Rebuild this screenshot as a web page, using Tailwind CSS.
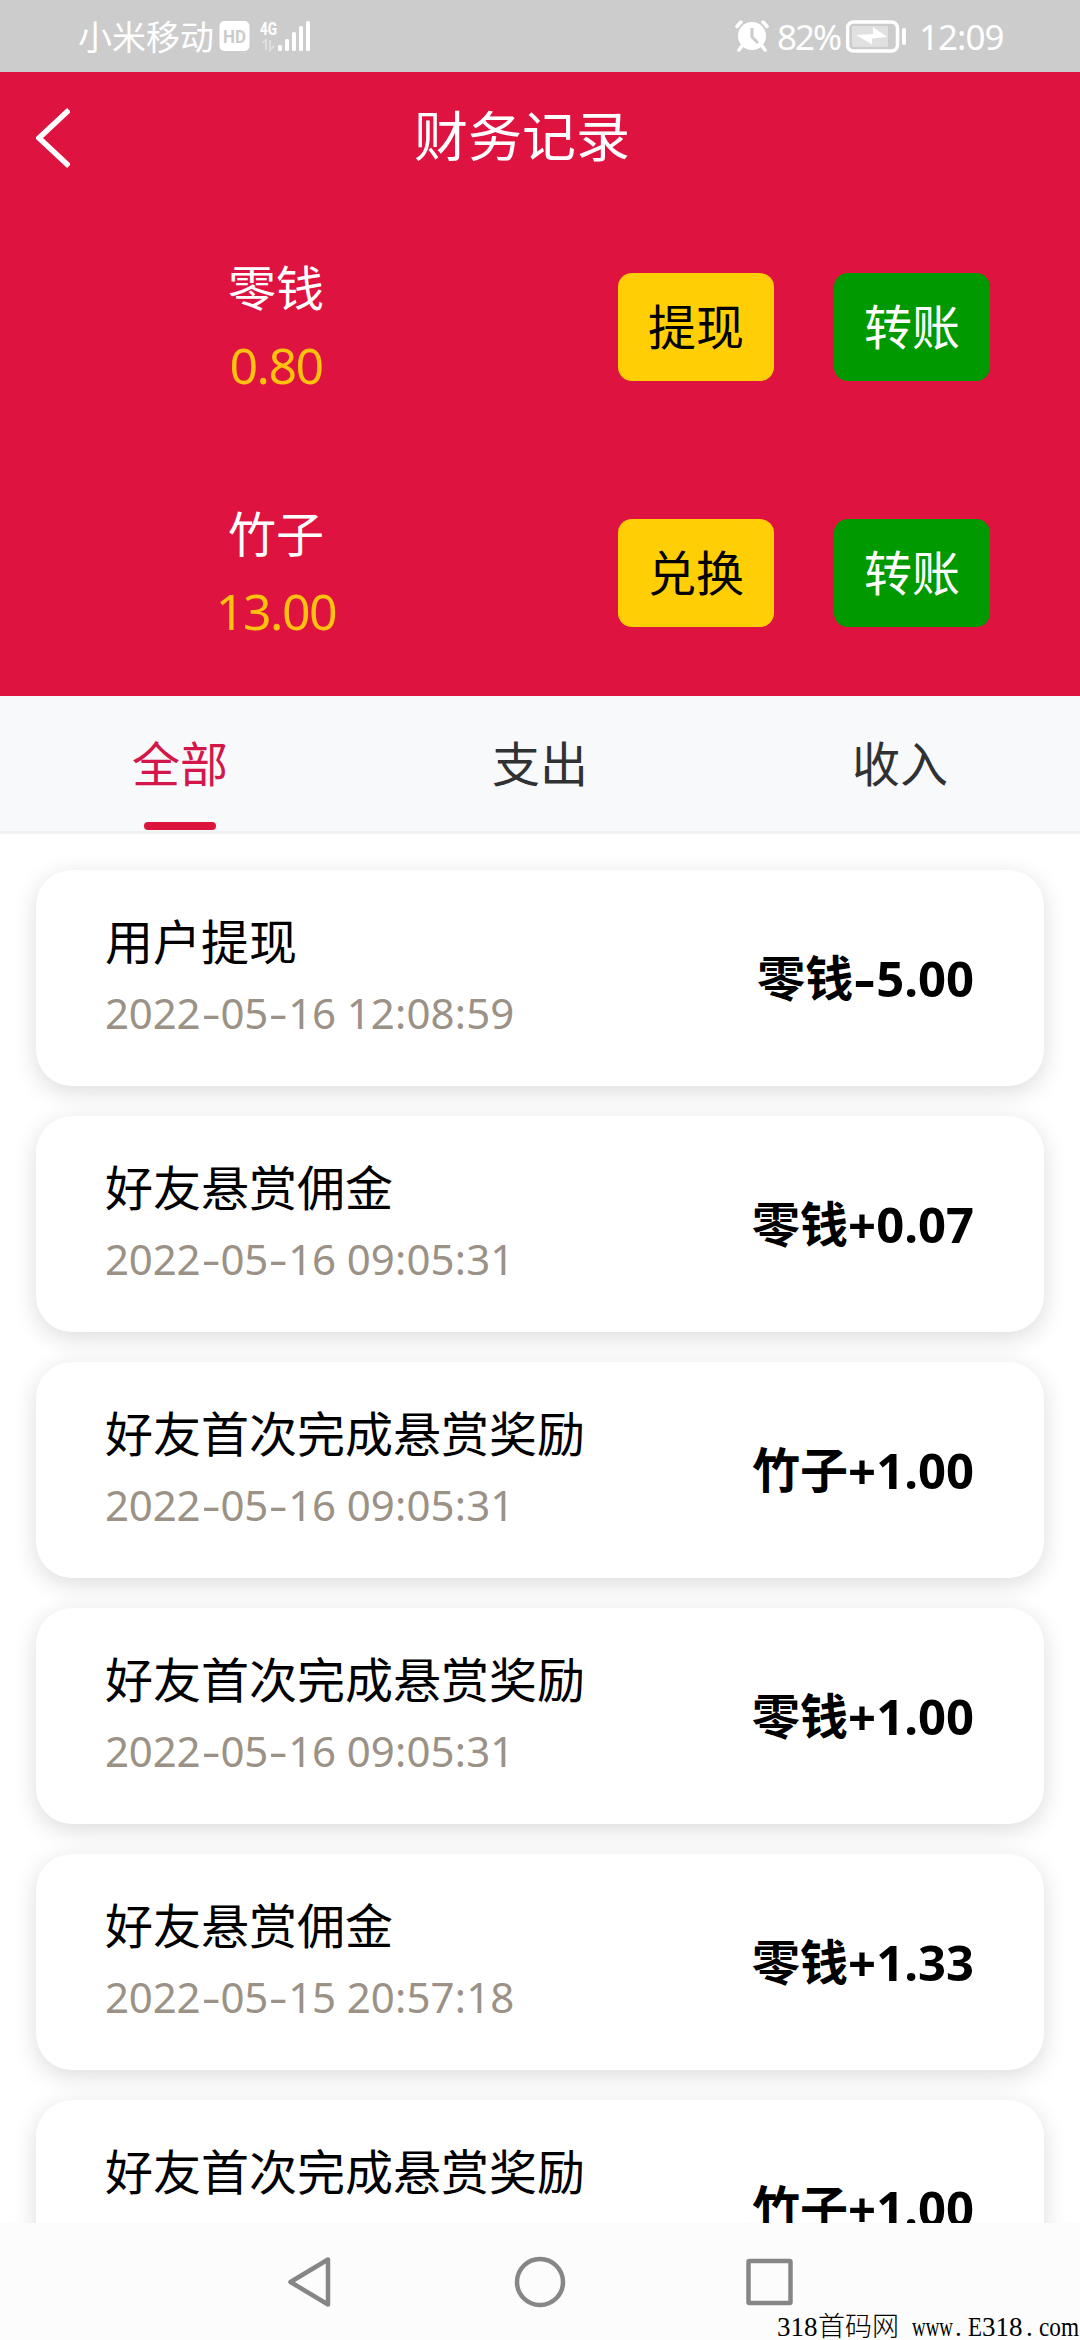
<!DOCTYPE html>
<html lang="zh-CN">
<head>
<meta charset="utf-8">
<title>财务记录</title>
<script src="https://cdn.jsdelivr.net/npm/@tailwindcss/browser@4"></script>
</head>
<body class="bg-white">
<div class="relative flex h-[2340px] w-[1080px] flex-col overflow-hidden font-['Noto_Sans','Noto_Sans_CJK_SC',sans-serif] whitespace-nowrap text-black">

  <!-- status bar -->
  <div class="flex h-[72px] shrink-0 items-center justify-between bg-[#ccc] pl-[78px] pr-[77px] text-white">
    <div class="flex items-center">
      <span class="pt-[2px] text-[34px] leading-[70px]">小米移动</span>
      <svg class="ml-[5px]" width="94" height="34" viewBox="0 0 94 34" fill="#fff">
        <rect x="0.500" y="2" width="30" height="30" rx="5"/>
        <text x="15.500" y="24" text-anchor="middle" font-family="Roboto" font-weight="700" font-size="19" textLength="23" lengthAdjust="spacingAndGlyphs" fill="#ccc">HD</text>
        <text x="41" y="15.500" font-family="Roboto" font-weight="700" font-size="19" textLength="17" lengthAdjust="spacingAndGlyphs">4G</text>
        <path d="M43 24l4-3v10M51 21v10l4-4" fill="none" stroke="#fff" stroke-opacity=".4" stroke-width="2"/>
        <rect x="59" y="26" width="4" height="6" rx="1.500"/><rect x="66" y="20" width="4" height="12" rx="1.500"/><rect x="73" y="13" width="4" height="19" rx="1.500"/><rect x="80" y="7" width="4" height="25" rx="1.500"/><rect x="87" y="2" width="4" height="30" rx="1.500"/>
      </svg>
    </div>
    <div class="flex items-center">
      <svg width="34" height="32" viewBox="0 0 34 32">
        <circle cx="17" cy="16" r="14" fill="#fff"/>
        <path d="M2 6.500L6 2M32 6.500L28 2M7 26l-3 4M27 26l3 4" stroke="#fff" stroke-width="3.500" stroke-linecap="round"/>
        <path d="M17 8v9l6 6" fill="none" stroke="#ccc" stroke-width="3"/>
      </svg>
      <span class="ml-[8px] w-[66px] pt-[2px] text-[35px] leading-[70px] tracking-[-2px]">82%</span>
      <svg class="ml-[3px]" width="62" height="34" viewBox="0 0 62 34">
        <rect x="1.500" y="3" width="50" height="29" rx="6" fill="none" stroke="#fff" stroke-width="3.500"/>
        <rect x="6" y="7" width="36" height="21" rx="1" fill="#fff" opacity=".4"/>
        <path d="M10 16l17-1 0-7 14 10-15 1.500 0 6z" fill="#fff"/>
        <rect x="56" y="9" width="4" height="17" rx="2" fill="#fff"/>
      </svg>
      <span class="ml-[11px] w-[84px] pt-[2px] text-[35px] leading-[70px] tracking-[-1px]">12:09</span>
    </div>
  </div>

  <!-- header and balances -->
  <div class="h-[624px] shrink-0 bg-[#de1340] text-white">
    <div class="flex h-[132px] items-center">
      <svg class="ml-[36px]" width="34" height="60" viewBox="0 0 34 60"><path d="M33 2L3 30l30 28" fill="none" stroke="#fff" stroke-width="5.500"/></svg>
      <h1 class="ml-[344px] text-[54px] leading-[128px] pb-[4px]">财务记录</h1>
    </div>
    <div class="flex h-[246px] items-center">
      <div class="w-[552px] text-center">
        <div class="text-[48px] leading-[78px]">零钱</div>
        <div class="text-[50px] leading-[76px] pb-[2px] tracking-[-1.500px] text-[#ffc20e]">0.80</div>
      </div>
      <div class="ml-[66px] h-[108px] w-[156px] rounded-[14px] bg-[#ffce05] text-center text-[48px] leading-[108px] text-black">提现</div>
      <div class="ml-[60px] h-[108px] w-[156px] rounded-[14px] bg-[#009900] text-center text-[48px] leading-[108px]">转账</div>
    </div>
    <div class="flex h-[246px] items-center">
      <div class="w-[552px] text-center">
        <div class="text-[48px] leading-[78px]">竹子</div>
        <div class="text-[50px] leading-[76px] pb-[2px] tracking-[-1.500px] text-[#ffc20e]">13.00</div>
      </div>
      <div class="ml-[66px] h-[108px] w-[156px] rounded-[14px] bg-[#ffce05] text-center text-[48px] leading-[108px] text-black">兑换</div>
      <div class="ml-[60px] h-[108px] w-[156px] rounded-[14px] bg-[#009900] text-center text-[48px] leading-[108px]">转账</div>
    </div>
  </div>

  <!-- tabs -->
  <div class="grid h-[138px] shrink-0 grid-cols-3 border-b-3 border-[#f0f1f3] bg-[#f8f9fb] text-center text-[48px] leading-[135px] text-[#303133]">
    <div class="flex flex-col items-center text-[#d3174a]"><span class="h-[126px]">全部</span><span class="h-[8px] w-[72px] rounded-full bg-[#dc143c]"></span></div>
    <div>支出</div>
    <div>收入</div>
  </div>

  <!-- records -->
  <div id="records" class="flex min-h-0 flex-1 flex-col gap-[30px] overflow-hidden px-[36px] pt-[36px]"></div>

  <!-- system navigation -->
  <div class="z-10 flex h-[117px] shrink-0 items-center justify-center bg-[#fcfcfc]">
    <svg width="506" height="52" viewBox="0 0 506 52" fill="none" stroke="#868686" stroke-width="4.500" stroke-linejoin="round">
      <path d="M41 3.500v45L3.500 26z"/>
      <circle cx="253" cy="26" r="23"/>
      <rect x="461.500" y="5" width="42" height="42" rx="1"/>
    </svg>
  </div>

  <!-- site mark -->
  <div class="absolute bottom-[-1px] left-[777px] z-20 flex h-[27px] items-center font-['Liberation_Serif','Noto_Sans_CJK_SC',serif] text-[27px] leading-[27px]">
    <span class="w-[41px]">318</span><span class="w-[94px] font-light">首码网</span><span class="w-[43px] origin-left scale-x-[.7]">www</span><span class="w-[13px]">.</span><span class="w-[14px] origin-left scale-x-[.85]">E</span><span class="w-[44px]">318</span><span class="w-[13px]">.</span><span class="w-[40px] origin-left scale-x-[.86]">com</span>
  </div>
</div>
<script>
const records = [
  ['用户提现', '2022-05-16 12:08:59', '零钱', '-5.00'],
  ['好友悬赏佣金', '2022-05-16 09:05:31', '零钱', '+0.07'],
  ['好友首次完成悬赏奖励', '2022-05-16 09:05:31', '竹子', '+1.00'],
  ['好友首次完成悬赏奖励', '2022-05-16 09:05:31', '零钱', '+1.00'],
  ['好友悬赏佣金', '2022-05-15 20:57:18', '零钱', '+1.33'],
  ['好友首次完成悬赏奖励', '', '竹子', '+1.00'],
];
document.getElementById('records').innerHTML = records.map(([title, time, unit, amount]) => `
  <div class="flex h-[216px] shrink-0 items-center justify-between rounded-[36px] bg-white pl-[69px] pr-[70px] shadow-[0_6px_24px_rgba(0,0,0,0.14)]">
    <div>
      <div class="text-[48px] leading-[72px]">${title}</div>
      <div class="h-[72px] text-[42px] leading-[70px] tracking-[-0.150px] text-[#9b9186]">${time.replace(/-/g, '<span class="inline-block w-[20px] scale-x-[1.4] text-center">-</span>').replace(/:/g, '<span class="inline-block w-[12px] text-center">:</span>')}</div>
    </div>
    <div class="flex items-center font-bold leading-[72px]"><span class="text-[48px]">${unit}</span><span class="text-[49px]">${amount.replace('-', '<span class="inline-block w-[23px] scale-x-[1.350] text-center">-</span>')}</span></div>
  </div>`).join('');
</script>
</body>
</html>
